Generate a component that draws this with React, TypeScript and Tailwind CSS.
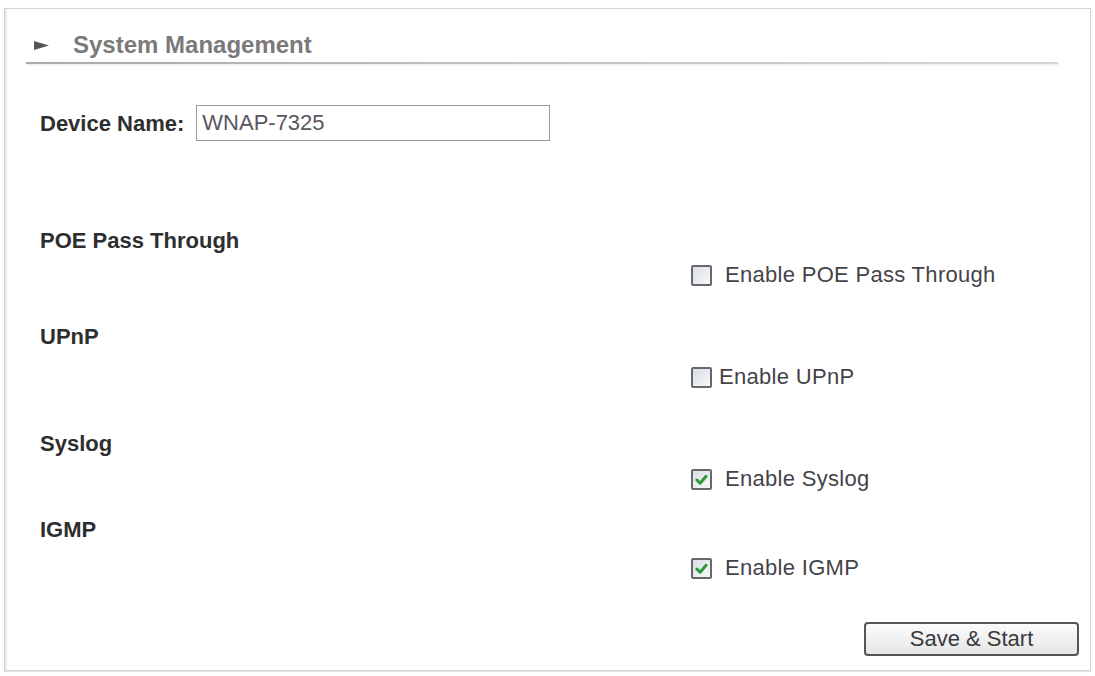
import React from 'react';

interface OptionProps {
  label: string;
  text: string;
  checked: boolean;
  labelMt: string;
  boxMt: string;
  gap: string;
}

const CheckBox: React.FC<{ checked: boolean }> = ({ checked }) => (
  <span className="w-[21px] h-[21px] shrink-0 rounded-[2px] border-2 border-[#67676d] bg-gradient-to-br from-[#d9dee6] to-[#f7f8fa] flex items-center justify-center">
    {checked && (
      <svg width="13" height="11" viewBox="0 0 14 12">
        <path d="M2 6.5 L5.5 10 L12 2.5" fill="none" stroke="#2a9a36" strokeWidth="3.2" strokeLinecap="round" strokeLinejoin="round" />
      </svg>
    )}
  </span>
);

const OptionRow: React.FC<OptionProps> = ({ label, text, checked, labelMt, boxMt, gap }) => (
  <div>
    <div className={`${labelMt} pl-[35px] h-[26px] leading-[26px] text-[22px] font-bold text-[#2e2e2e]`}>{label}</div>
    <div className={`${boxMt} pl-[686px] h-[26px] flex items-center ${gap}`}>
      <CheckBox checked={checked} />
      <span className="text-[22px] leading-[26px] tracking-[0.3px] text-[#45434a]">{text}</span>
    </div>
  </div>
);

const App: React.FC = () => {
  return (
    <div className="w-[1095px] h-[676px] bg-white overflow-hidden font-['Liberation_Sans',Arial,sans-serif]">
      <div className="ml-[4px] mt-[8px] w-[1087px] h-[663px] border border-[#d2d2d2] shadow-[inset_2px_0_0_#ececec,0_1px_1px_#e4e4e4] flex flex-col">
        {/* header */}
        <div className="ml-[21px] mr-[32px]">
          <div className="pt-[24px] pb-[5px] flex items-center">
            <svg width="15" height="9" viewBox="0 0 15 9" className="ml-[8px] shrink-0">
              <path d="M0 0 L15 4.5 L0 9 Z" fill="#555" />
            </svg>
            <span className="ml-[24px] text-[24px] leading-[24px] font-bold text-[#7a7a7a]">System Management</span>
          </div>
          <div className="h-[2px] bg-gradient-to-r from-[#a9a9a9] via-[#c2c2c2] to-[#d6d6d6] shadow-[0_1px_2px_#e6e6e6]" />
        </div>

        {/* device name */}
        <div className="mt-[41px] pl-[35px] flex items-center">
          <span className="text-[22px] font-bold text-[#2e2e2e]">Device Name:</span>
          <input
            readOnly
            value="WNAP-7325"
            className="ml-[12px] w-[354px] h-[36px] border border-[#9a9a9a] px-[5px] text-[22px] text-[#5a5560] outline-none font-['Liberation_Sans',Arial,sans-serif]"
          />
        </div>

        <OptionRow label="POE Pass Through" text="Enable POE Pass Through" checked={false} labelMt="mt-[87px]" boxMt="mt-[8px]" gap="gap-[13px]" />
        <OptionRow label="UPnP" text="Enable UPnP" checked={false} labelMt="mt-[36px]" boxMt="mt-[14px]" gap="gap-[7px]" />
        <OptionRow label="Syslog" text="Enable Syslog" checked={true} labelMt="mt-[41px]" boxMt="mt-[9px]" gap="gap-[13px]" />
        <OptionRow label="IGMP" text="Enable IGMP" checked={true} labelMt="mt-[25px]" boxMt="mt-[12px]" gap="gap-[13px]" />

        <div className="mt-[41px] pr-[11px] flex justify-end">
          <button className="w-[215px] h-[34px] rounded-[4px] border-2 border-[#555] bg-gradient-to-b from-[#fbfbfb] to-[#e6e6e6] text-[22px] leading-[28px] text-[#3a3a3f]">
            Save &amp; Start
          </button>
        </div>
      </div>
    </div>
  );
};

export default App;
